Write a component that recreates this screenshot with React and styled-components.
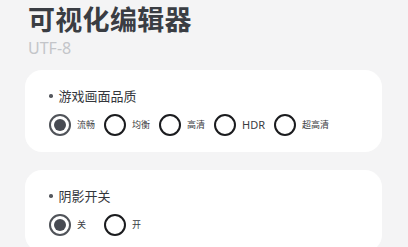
import React, { useState } from "react";
import styled, { createGlobalStyle } from "styled-components";

const Global = createGlobalStyle`
  html, body { margin: 0; padding: 0; background: #f4f4f5; }
  body { font-family: "Noto Sans", "Noto Sans CJK SC", sans-serif; overflow: hidden; }
`;

const Page = styled.div`
  width: 408px;
  height: 247px;
  padding: 0 26px 0 25px;
  box-sizing: border-box;
  background: #f4f4f5;
  display: flex;
  flex-direction: column;
`;

const Header = styled.header`
  display: flex;
  flex-direction: column;
  padding-left: 3px;
  margin-bottom: 12px;
`;

const Title = styled.h1`
  margin: 0;
  font-family: "Noto Sans CJK SC", sans-serif;
  font-size: 27px;
  line-height: 38px;
  font-weight: 700;
  color: #3a3d43;
  letter-spacing: 0.3px;
`;

const Sub = styled.div`
  font-family: "Noto Sans", sans-serif;
  font-size: 16px;
  line-height: 20px;
  color: #c3c5c9;
`;

const Cards = styled.div`
  display: flex;
  flex-direction: column;
  gap: 18px;
`;

const Card = styled.section`
  background: #ffffff;
  border-radius: 17px;
  padding: 17px 24px 16px 24px;
  display: flex;
  flex-direction: column;
  gap: 9px;
`;

const Heading = styled.div`
  display: flex;
  align-items: center;
  gap: 6px;
  font-family: "Noto Sans CJK SC", sans-serif;
  font-size: 13px;
  line-height: 18px;
  color: #34373c;
  &::before {
    content: "";
    width: 3.5px;
    height: 3.5px;
    border-radius: 50%;
    background: #55585e;
  }
`;

const Options = styled.div`
  display: flex;
  align-items: center;
  gap: 9px;
`;

const Option = styled.label`
  display: flex;
  align-items: center;
  gap: 6px;
  cursor: pointer;
`;

const Circle = styled.span`
  width: 22px;
  height: 22px;
  box-sizing: border-box;
  border-radius: 50%;
  border: 2.2px solid ${(p) => (p.$on ? "#505359" : "#1b1c1f")};
  display: flex;
  align-items: center;
  justify-content: center;
  &::after {
    content: "";
    width: 12px;
    height: 12px;
    border-radius: 50%;
    background: #474a52;
    display: ${(p) => (p.$on ? "block" : "none")};
  }
`;

const Label = styled.span`
  min-width: 18px;
  font-family: ${(p) => (p.$latin ? '"Noto Sans", sans-serif' : '"Noto Sans CJK SC", sans-serif')};
  font-size: ${(p) => (p.$latin ? "11px" : "9px")};
  font-weight: 400;
  line-height: 14px;
  color: #3a3c41;
`;

function RadioGroup({ options, initial }) {
  const [value, setValue] = useState(initial);
  return (
    <Options>
      {options.map((o) => (
        <Option key={o} onClick={() => setValue(o)}>
          <Circle $on={value === o} />
          <Label $latin={/^[A-Za-z]+$/.test(o)}>{o}</Label>
        </Option>
      ))}
    </Options>
  );
}

export default function App() {
  return (
    <Page>
      <Global />
      <Header>
        <Title>可视化编辑器</Title>
        <Sub>UTF-8</Sub>
      </Header>
      <Cards>
        <Card>
          <Heading>游戏画面品质</Heading>
          <RadioGroup options={["流畅", "均衡", "高清", "HDR", "超高清"]} initial="流畅" />
        </Card>
        <Card>
          <Heading>阴影开关</Heading>
          <RadioGroup options={["关", "开"]} initial="关" />
        </Card>
      </Cards>
    </Page>
  );
}
